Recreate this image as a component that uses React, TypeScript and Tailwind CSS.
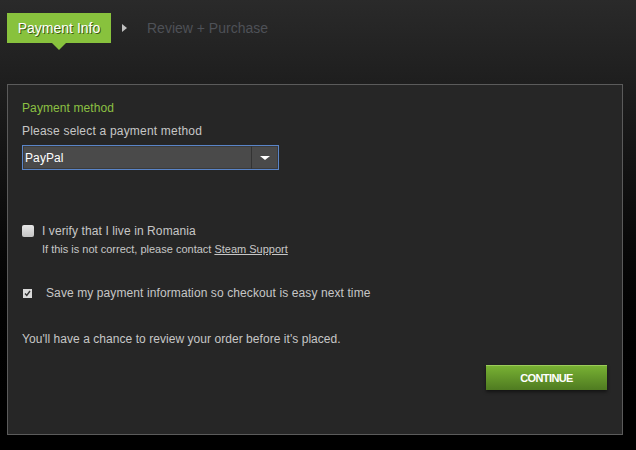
import React from "react";

const font = { fontFamily: '"Liberation Sans", Arial, sans-serif' };

function Checkbox({ checked }: { checked?: boolean }) {
  if (checked) {
    return (
      <span className="flex h-[9px] w-[9px] items-center justify-center bg-[#d9d9d9]">
        <svg width="7" height="7" viewBox="0 0 7 7">
          <path d="M1 3.5 L2.8 5.5 L6 1" stroke="#333" strokeWidth="1.4" fill="none" />
        </svg>
      </span>
    );
  }
  return <span className="block h-[12px] w-[12px] rounded-[2px] bg-gradient-to-b from-[#e6e6e6] to-[#c4c4c4]" />;
}

export default function App() {
  return (
    <div
      className="h-[450px] w-[636px] overflow-hidden bg-gradient-to-b from-[#2a2a2a] via-[#111111] via-40% to-black text-[12px] tracking-[0.1px]"
      style={font}
    >
      <div className="flex items-center px-[7px] pt-[13px]">
        <div className="relative flex h-[30px] w-[104px] items-center justify-center bg-[#88c23d] text-[14px] tracking-normal text-white [text-shadow:1px_1px_0_#3d5a17]">
          Payment Info
          <span className="absolute left-[45px] top-[30px] h-0 w-0 border-x-[7px] border-t-[7px] border-x-transparent border-t-[#88c23d]" />
        </div>
        <span className="ml-[11px] h-0 w-0 border-y-[4px] border-l-[5px] border-y-transparent border-l-[#c0c0c0]" />
        <span className="ml-[20px] text-[14px] tracking-normal text-[#4e5157]">Review + Purchase</span>
      </div>

      <div className="mx-[7px] mt-[41px] h-[351px] w-[616px] border border-[#5b5b5b] bg-[#262626] px-[14px]">
        <div className="mt-[16px] leading-[14px] text-[#8cc043]">Payment method</div>
        <div className="mt-[9px] tracking-[0.2px] leading-[14px] text-[#c6c6c6]">Please select a payment method</div>
        <div className="mt-[7px] flex h-[25px] w-[257px] items-center border border-[#5a85c8] bg-[#4a4a4a] shadow-[inset_0_0_0_1px_#3b3b3b]">
          <span className="flex-1 pl-[2px] text-white">PayPal</span>
          <span className="flex h-full w-[27px] items-center justify-center border-l border-[#333]">
            <span className="h-0 w-0 border-x-[5px] border-t-[4px] border-x-transparent border-t-white" />
          </span>
        </div>

        <div className="mt-[54px] flex items-center gap-[8px] leading-[14px] text-[#c6c6c6]">
          <Checkbox />
          <span>I verify that I live in Romania</span>
        </div>
        <div className="mt-[5px] pl-[20px] text-[11px] tracking-normal leading-[13px] text-[#c6c6c6]">
          If this is not correct, please contact <span className="underline">Steam Support</span>
        </div>

        <div className="mt-[30px] flex items-center gap-[14px] pl-[1px] leading-[14px] text-[#c6c6c6]">
          <Checkbox checked />
          <span>Save my payment information so checkout is easy next time</span>
        </div>

        <div className="mt-[32px] tracking-[0.05px] leading-[14px] text-[#c6c6c6]">
          You'll have a chance to review your order before it's placed.
        </div>

        <div className="mt-[19px] flex justify-end pr-[1px]">
          <button className="flex h-[25px] w-[121px] items-center justify-center border-t border-[#9ccc5a] bg-gradient-to-b from-[#78b133] to-[#4f7b21] text-[11px] font-bold tracking-[-0.6px] text-white shadow-[0_2px_3px_rgba(0,0,0,0.5)]">
            CONTINUE
          </button>
        </div>
      </div>
    </div>
  );
}
